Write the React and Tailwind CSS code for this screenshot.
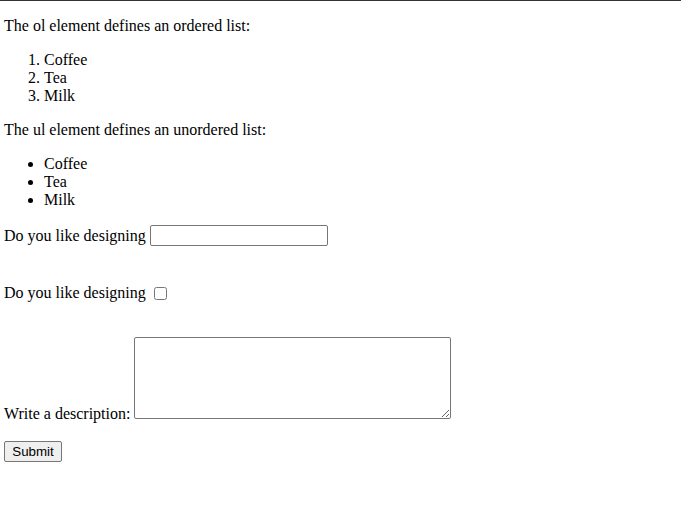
import React from "react";

const App = () => {
  return (
    <div className="min-h-[529px] bg-white border-t border-[#333333] px-1 text-[16px] leading-[18px] text-black font-['Liberation_Serif','Times_New_Roman',serif]">
      <p className="mt-4">The ol element defines an ordered list:</p>
      <ol className="mt-4 list-decimal pl-10">
        <li>Coffee</li>
        <li>Tea</li>
        <li>Milk</li>
      </ol>

      <p className="mt-4">The ul element defines an unordered list:</p>
      <ul className="mt-4 list-disc pl-10">
        <li>Coffee</li>
        <li>Tea</li>
        <li>Milk</li>
      </ul>

      <form onSubmit={(e) => e.preventDefault()}>
        {/* text input row */}
        <div className="mt-4 flex h-[21px] items-center">
          <label htmlFor="design">Do you like designing</label>
          <input
            id="design"
            type="text"
            className="ml-1 h-[21px] w-[178px] rounded-[2px] border border-[#767676] bg-white px-[2px] text-[13.333px] outline-none font-['Liberation_Sans',Arial,sans-serif]"
          />
        </div>

        {/* checkbox row */}
        <div className="mt-[38px] flex h-[18px] items-center">
          <label htmlFor="likes">Do you like designing</label>
          <input
            id="likes"
            type="checkbox"
            className="ml-2 h-[13px] w-[13px]"
          />
        </div>

        {/* textarea row */}
        <div className="mt-[35px]">
          <label htmlFor="desc">Write a description:</label>
          <textarea
            id="desc"
            className="ml-1 inline-block h-[82px] w-[317px] resize rounded-[2px] border border-[#767676] bg-white align-baseline outline-none"
          />
        </div>

        <button
          type="submit"
          className="mt-[18px] block h-[21px] w-[58px] rounded-[2px] border border-[#767676] bg-[#efefef] text-[13.333px] leading-none font-['Liberation_Sans',Arial,sans-serif]"
        >
          Submit
        </button>
      </form>
    </div>
  );
};

export default App;
